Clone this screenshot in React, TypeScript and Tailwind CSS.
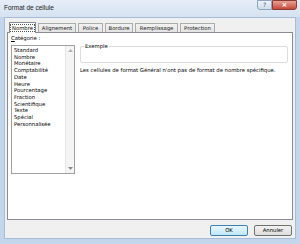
import React from "react";

const categories = [
  "Standard",
  "Nombre",
  "Monétaire",
  "Comptabilité",
  "Date",
  "Heure",
  "Pourcentage",
  "Fraction",
  "Scientifique",
  "Texte",
  "Spécial",
  "Personnalisée",
];

const tabs = [
  { t: "Nombre", w: "w-[27px]" },
  { t: "Alignement", w: "w-[38px]" },
  { t: "Police", w: "w-[25px]" },
  { t: "Bordure", w: "w-[28px]" },
  { t: "Remplissage", w: "w-[43px]" },
  { t: "Protection", w: "w-[35px]" },
];

export default function App() {
  return (
    <div
      className="w-[300px] h-[244px] flex flex-col bg-[#c4d6ec] text-black overflow-hidden"
      style={{ fontFamily: "'DejaVu Sans', Verdana, sans-serif" }}
    >
      {/* title bar */}
      <div className="h-[17px] flex items-start bg-gradient-to-b from-[#e6eef8] to-[#d5e2f1]">
        <span
          className="ml-[4px] mt-[4px] text-[6.5px] leading-[8px] text-[#222]"
          style={{ fontFamily: "'Liberation Sans', Arial, sans-serif" }}
        >
          Format de cellule
        </span>
        <div className="flex-1" />
        <div className="w-[15px] h-[10px] border border-[#8ea4c0] rounded-bl-[3px] bg-gradient-to-b from-[#eef3f9] to-[#cfdcec] flex items-center justify-center text-[6px] leading-none text-[#44546a]">
          ?
        </div>
        <div className="w-[25px] h-[10px] mr-[3px] border border-[#8a3a32] rounded-br-[3px] bg-gradient-to-b from-[#e8a093] to-[#c5473a] flex items-center justify-center text-[7px] leading-none font-bold text-white">
          ×
        </div>
      </div>

      {/* client area */}
      <div className="mx-[4px] flex-1 bg-[#f0f0f0] border border-[#a7bcd6] flex flex-col pt-[3px] px-[2px]">
        <div className="flex items-end gap-[2px] h-[11px] pl-[2px]">
          {tabs.map(({ t, w }, i) =>
            i === 0 ? (
              <div
                key={t}
                className={`${w} h-[11px] -mb-px relative z-10 bg-white border border-b-0 border-[#898c95] text-[5.3px] leading-[10px] flex justify-center`}
              >
                <span className="border border-dotted border-[#555] px-[1px] h-[8px] mt-[1px] leading-[7px]">{t}</span>
              </div>
            ) : (
              <div
                key={t}
                className={`${w} h-[9px] bg-gradient-to-b from-[#f2f2f2] to-[#e3e3e3] border border-b-0 border-[#acacac] text-[5.3px] leading-[8px] text-[#222] text-center whitespace-nowrap`}
              >
                {t}
              </div>
            )
          )}
        </div>
        <div className="h-[188px] bg-white border border-[#898c95] flex pt-[2px] pl-[3px]">
          <div className="flex flex-col w-[64px]">
            <span className="text-[5.3px] leading-[7px]">
              <span className="underline">C</span>atégorie :
            </span>
            <div className="mt-[3px] h-[129px] border border-[#a0a0a0] flex">
              <div className="flex-1 pt-[1px] pl-[2px] flex flex-col">
                {categories.map((c) => (
                  <span key={c} className="text-[5.3px] leading-[6.7px] whitespace-nowrap">
                    {c}
                  </span>
                ))}
              </div>
              <div className="w-[9px] bg-[#f4f4f4] border-l border-[#e6e6e6] flex flex-col items-center justify-between py-[3px]">
                <svg width="5" height="3" viewBox="0 0 5 3"><path d="M0 3 L2.5 0 L5 3 Z" fill="#b0b0b0" /></svg>
                <svg width="5" height="3" viewBox="0 0 5 3"><path d="M0 0 L2.5 3 L5 0 Z" fill="#8a8a8a" /></svg>
              </div>
            </div>
          </div>
          <div className="ml-[5px] w-[208px] flex flex-col">
            <div className="mt-[11px] h-[17px] border border-[#dcdcdc] rounded-[2px] relative">
              <span className="absolute -top-[4px] left-[3px] bg-white px-[1px] text-[5.3px] leading-[7px]">
                Exemple
              </span>
            </div>
            <span className="mt-[4px] text-[5.3px] leading-[7px] whitespace-nowrap">
              Les cellules de format Général n'ont pas de format de nombre spécifique.
            </span>
          </div>
        </div>
        <div className="flex justify-end gap-[6px] mt-[5px] pr-[1px]">
          <div className="w-[38px] h-[11px] border border-[#3c7fb1] rounded-[2px] bg-gradient-to-b from-[#eaf6fd] to-[#bee6fd] flex items-center justify-center text-[5.3px]">
            OK
          </div>
          <div className="w-[38px] h-[11px] border border-[#707070] rounded-[2px] bg-gradient-to-b from-[#f2f2f2] to-[#dddddd] flex items-center justify-center text-[5.3px]">
            Annuler
          </div>
        </div>
      </div>
      <div className="h-[5px]" />
    </div>
  );
}
